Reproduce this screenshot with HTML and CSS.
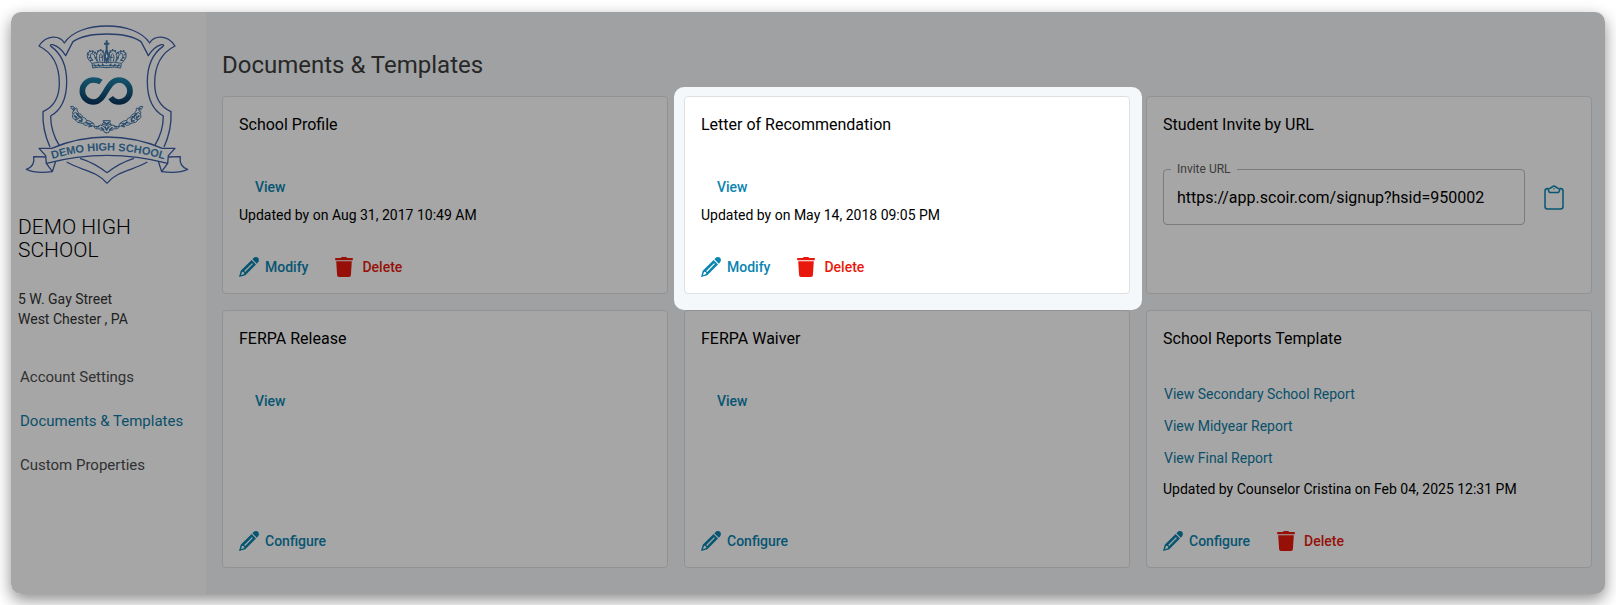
FILE: index.html
```html
<!DOCTYPE html>
<html lang="en">
<head>
<meta charset="utf-8">
<title>Documents &amp; Templates</title>
<link rel="stylesheet" href="styles.css">
</head>
<body>
<svg class="sprite" aria-hidden="true">
  <symbol id="pencil" viewBox="0 0 20 20">
    <path fill="currentColor" d="M14.300 1.200Q15.600 0 17 .1 19.900.3 19.900 3.200 19.900 4.600 18.700 5.800L17.800 6.700 13.400 2.200z"/>
    <path fill="currentColor" fill-rule="evenodd" d="M12.600 3 17 7.400 6.800 17.800Q6.300 18.300 5.600 18.500L0 20 1.500 14.400Q1.700 13.700 2.200 13.200zM13 6.200 5.200 14 6.100 14.900 13.900 7.100zM3.100 14.800 1.900 18.200 5.300 17.100 4.900 15.300z"/>
  </symbol>
  <symbol id="trash" viewBox="0 0 20 20">
    <path fill="currentColor" d="M1.200.9h5.600Q7.200 0 8.200 0h3.600q1 0 1.400.9h5.600v2.400H1.200zM2.200 4.300h15.600l-.9 13.900q-.1 1.800-1.900 1.800H5q-1.800 0-1.900-1.800z"/>
  </symbol>
</svg>
<div class="app">
  <aside class="sidebar">
    <svg class="crest" viewBox="60 60 525 510" role="img" aria-label="Demo High School crest">
      <defs>
        <linearGradient id="mark" gradientUnits="userSpaceOnUse" x1="0" y1="231" x2="0" y2="315">
          <stop offset="0" stop-color="#2186ac"/><stop offset="1" stop-color="#0a3358"/>
        </linearGradient>
        <path id="arc" d="M155 478Q321 425 495 479"/>
        <g id="shield">
          <path d="M321 78C265 78 215 95 193 129C180 106 140 102 117 138C163 161 178 207 178 250C178 290 165 319 129 335C127 375 136 410 150 441"/>
          <path d="M321 102C282 102 240 110 219 125Q212 138 197 167Q181 141 158 134Q147 133 153 139C190 165 200 205 200 245C200 285 192 325 152 348Q152 395 178 437"/>
          <path d="M200 486C240 510 292 513 321 550"/>
          <path d="M240 475Q282 488 321 518"/>
          <path d="M321 411Q235 411 155 445L117 445L137 467L139 490Q230 466 321 466"/>
          <path d="M138 471L101 470Q106 499 79 508Q105 521 157 515L167 484M139 490L157 515"/>
        </g>
        <g id="crown">
          <path d="M321 203Q294 199 278 204L276 190Q257 174 263 160Q268 151 278 154Q292 158 292 165M276 190Q300 184 321 188M278 181Q268 172 271 163Q276 157 282 164L291 184M293 185Q285 164 295 153Q304 148 311 156L314 186M300 184Q295 165 303 161Q308 163 308 184M278 197H321"/>
          <path d="M262 158l4 8M269 150v7M278 151v7M287 155l-3 7M294 150v7M302 147v7M310 151l-3 7M266 174l8-2M270 182l9-2M284 175l5-3M302 172h7M282 193l6 7M294 192l6 7M306 191l6 7" stroke-width="4"/>
        </g>
        <g id="garland">
          <path d="M321 399Q310 399 311 390Q300 394 299 386Q286 389 281 379Q296 383 301 375Q309 376 314 383M321 362H309Q314 369 306 373L321 376M281 380Q286 370 276 370Q267 367 261 376Q255 378 247 370Q260 371 261 361Q271 362 280 370M247 370Q231 370 224 358Q214 354 219 342Q224 333 234 342Q245 339 248 352Q259 353 260 362M224 358Q237 361 238 350Q233 343 229 350M218 341Q215 334 222 333Q211 325 212 319Q222 317 226 326Q233 320 231 333Q238 336 234 342"/>
          <path d="M219 323l6 8M222 346l10 10M229 340l13 13M241 348l6 13M236 362l11 2M257 367l15 7M265 380l13-3M288 381l10-2M302 382l10 8M311 366l10 7M314 379l7 12" stroke-width="5"/>
        </g>
      </defs>
      <g fill="none" stroke="#3d5ea6" stroke-width="4" stroke-linejoin="round">
        <use href="#shield"/><use href="#shield" transform="translate(642 0) scale(-1 1)"/>
      </g>
      <g fill="none" stroke="#4579a8" stroke-width="3">
        <use href="#crown"/><use href="#crown" transform="translate(640 0) scale(-1 1)"/>
        <path d="M320 121v28M312 131h16M320 149l-6 20 6 15 6-15z" stroke-width="6"/>
        <use href="#garland"/><use href="#garland" transform="translate(640 0) scale(-1 1)"/>
      </g>
      <path d="M303 246C294 240 287 240 280 240A33 33 0 0 0 280 306C318 306 318 240 357 240A33 33 0 0 1 357 306Q341 306 332 293" fill="none" stroke="url(#mark)" stroke-width="17"/>
      <text class="crest-text"><textPath href="#arc" startOffset="50%" text-anchor="middle">DEMO HIGH SCHOOL</textPath></text>
    </svg>
    <h2 class="school">DEMO HIGH SCHOOL</h2>
    <address class="address">5 W. Gay Street<br>West Chester , PA</address>
    <nav class="nav">
      <a href="#account">Account Settings</a>
      <a href="#documents" class="active" aria-current="page">Documents &amp; Templates</a>
      <a href="#custom">Custom Properties</a>
    </nav>
  </aside>
  <main class="main">
    <h1 class="title">Documents &amp; Templates</h1>
    <div class="cards">
      <section class="card">
        <h3>School Profile</h3>
        <div class="body"><button class="view">View</button><p>Updated by on Aug 31, 2017 10:49 AM</p></div>
        <div class="actions">
          <button class="btn"><svg><use href="#pencil"/></svg>Modify</button>
          <button class="btn danger"><svg><use href="#trash"/></svg>Delete</button>
        </div>
      </section>
      <section class="card spotlight">
        <h3>Letter of Recommendation</h3>
        <div class="body"><button class="view">View</button><p>Updated by on May 14, 2018 09:05 PM</p></div>
        <div class="actions">
          <button class="btn"><svg><use href="#pencil"/></svg>Modify</button>
          <button class="btn danger"><svg><use href="#trash"/></svg>Delete</button>
        </div>
      </section>
      <section class="card">
        <h3>Student Invite by URL</h3>
        <div class="invite">
          <div class="field">
            <label for="invite">Invite URL</label>
            <input id="invite" type="text" value="https://app.scoir.com/signup?hsid=950002" readonly>
          </div>
          <button class="copy" aria-label="Copy invite URL">
            <svg viewBox="0 0 20 25" fill="none" stroke="currentColor" stroke-width="1.500" stroke-linejoin="round">
              <path d="M4.500 3.600H3.500Q1 3.600 1 6.100V21.500Q1 24 3.500 24H16.500Q19 24 19 21.500V6.100Q19 3.600 16.500 3.600H15.500"/>
              <path d="M4.200 5Q4.200 3.600 5.800 3.400L8.200 2Q9.200.9 10 .9T11.800 2L14.200 3.400Q15.800 3.600 15.800 5L14.600 7.400H5.400z"/>
              <path d="M9.500 3.800h1"/>
            </svg>
          </button>
        </div>
      </section>
      <section class="card">
        <h3>FERPA Release</h3>
        <div class="body"><button class="view">View</button></div>
        <div class="actions"><button class="btn"><svg><use href="#pencil"/></svg>Configure</button></div>
      </section>
      <section class="card">
        <h3>FERPA Waiver</h3>
        <div class="body"><button class="view">View</button></div>
        <div class="actions"><button class="btn"><svg><use href="#pencil"/></svg>Configure</button></div>
      </section>
      <section class="card">
        <h3>School Reports Template</h3>
        <div class="body reports">
          <a href="#secondary">View Secondary School Report</a>
          <a href="#midyear">View Midyear Report</a>
          <a href="#final">View Final Report</a>
          <p>Updated by Counselor Cristina on Feb 04, 2025 12:31 PM</p>
        </div>
        <div class="actions">
          <button class="btn"><svg><use href="#pencil"/></svg>Configure</button>
          <button class="btn danger"><svg><use href="#trash"/></svg>Delete</button>
        </div>
      </section>
    </div>
  </main>
</div>
</body>
</html>
```
FILE: styles.css
```css
* { box-sizing: border-box; }
body {
  margin: 0;
  padding: 12px 11px 11px;
  min-height: 100vh;
  display: flex;
  background: #fff;
  color: #000;
  font: 14px/20px Roboto, "Liberation Sans", sans-serif;
}
h1, h2, h3, p { margin: 0; font-weight: 400; }
button { font: inherit; border: 0; background: none; padding: 0; cursor: pointer; }
a { text-decoration: none; }
.sprite { display: none; }

.app {
  flex: 1;
  display: flex;
  position: relative;
  overflow: hidden;
  border-radius: 10px;
  background: #f4f8fb;
  box-shadow: 0 6px 16px rgba(0, 0, 0, .45);
}

.sidebar { width: 195px; background: #fff; padding: 8px 7px; flex: none; }
.crest { display: block; width: 175px; height: 170px; margin-left: 2px; }
.crest-text { font: bold 33px "Liberation Sans", Arial, sans-serif; fill: #3c80b5; }
.school { margin-top: 26px; font-size: 21px; line-height: 23px; font-weight: 300; }
.address { margin-top: 27px; font-style: normal; color: #333; }
.nav { margin-top: 36px; padding-left: 2px; display: flex; flex-direction: column; gap: 20px; font-size: 15px; line-height: 24px; }
.nav a { color: #4c4c4c; }
.nav a.active { color: #107ba3; }

.main { flex: 1; min-width: 0; padding: 37px 13px 26px 16px; display: flex; flex-direction: column; }
.title { font-size: 24px; line-height: 32px; color: #3c3c3c; margin-bottom: 15px; }
.cards { display: grid; grid-template-columns: repeat(3, minmax(0, 1fr)); gap: 16px; }
.card {
  display: flex;
  flex-direction: column;
  padding: 16px;
  border: 1px solid #e0e0e0;
  border-radius: 4px;
  background: #fff;
}
.card h3 { font-size: 16px; line-height: 24px; margin-bottom: 32px; }
.body { display: flex; flex-direction: column; align-items: flex-start; margin-bottom: 32px; }
.view { height: 36px; padding: 0 16px; font-weight: 500; color: #0a84b0; }
.reports a { color: #107ba3; padding-left: 1px; line-height: 22px; margin-bottom: 10px; }
.actions { margin-top: auto; display: flex; gap: 26px; }
.btn { display: flex; align-items: center; gap: 6px; font-weight: 500; color: #0a84b0; }
.btn svg { width: 20px; height: 20px; }
.danger { color: #e8190c; gap: 8px; }

.invite { display: flex; gap: 8px; align-items: center; }
.field { flex: 1; position: relative; }
.field label {
  position: absolute;
  left: 8px;
  top: -8px;
  padding: 0 6px;
  background: #fff;
  color: #5c5c5c;
  font-size: 12px;
  line-height: 16px;
}
.field input {
  display: block;
  width: 100%;
  height: 56px;
  padding: 0 13px;
  border: 1px solid #bdbdbd;
  border-radius: 4px;
  background: #fff;
  color: #000;
  font: 16px/24px Roboto, "Liberation Sans", sans-serif;
}
.copy { width: 42px; height: 40px; display: grid; place-items: center; color: #0a84b0; }
.copy svg { width: 20px; height: 25px; }

/* Dims everything in the app except a rounded window around the card. */
.spotlight { position: relative; }
.spotlight::after {
  content: "";
  position: absolute;
  z-index: 2;
  inset: -10px -13px -17px -11px;
  border-radius: 10px;
  box-shadow: 0 0 0 3000px rgba(0, 0, 0, .35);
  pointer-events: none;
}
```
